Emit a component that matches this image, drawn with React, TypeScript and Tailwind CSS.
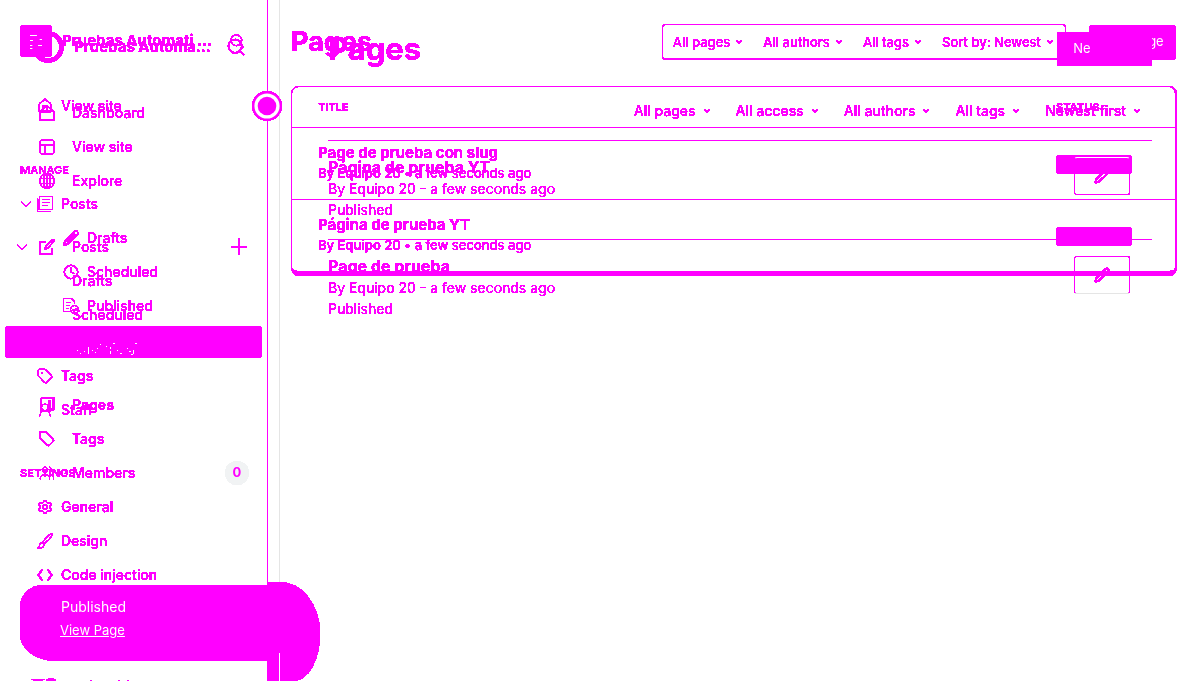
import type { ReactNode } from "react";
import {
  ChevronDown,
  Clock,
  House,
  PanelsTopLeft,
  Pencil,
  Plus,
  Search,
  Settings,
  Tag,
  Users,
  UserRound,
} from "lucide-react";

const icon = "size-4 shrink-0";

function Glyph({ children, width = 1.2 }: { children: ReactNode; width?: number }) {
  return (
    <svg viewBox="0 0 16 16" className="size-4 shrink-0" fill="none" stroke="currentColor" strokeWidth={width} aria-hidden="true">
      {children}
    </svg>
  );
}

const PostsIcon = () => (
  <Glyph>
    <path d="M2.500 .5H15.500V13.500H2.500Z M.5 2.500V15.500H13.500 M5 3.500H13 M5 6.500H13 M5 9.500H10.500" />
  </Glyph>
);
const PublishedIcon = () => (
  <Glyph>
    <path d="M7 13.500H.5V.5H8.500L11.500 3.500V6 M3 4.500H8 M3 7.500H6.500 M3 10.500H5.500" />
    <circle cx="11.500" cy="11.500" r="4" />
    <path d="M9.500 11.500L11 13L13.500 10" />
  </Glyph>
);
const PencilIcon = () => (
  <Glyph width={1.6}>
    <path d="M1 15L2 10.800L11.500 1.500Q13 .4 14.400 1.700Q15.600 3 14.500 4.500L5.200 14Z M3.800 11.800L12 4" />
  </Glyph>
);
const BrushIcon = () => (
  <Glyph width={1.2}>
    <path d="M6 9Q10 3 14 .8Q16 .5 15.200 2.200Q13 6.500 7.500 10.200Z M5.500 9.500Q2.800 9.500 2.700 12Q2.500 14 .6 15.200Q6.500 16 7.200 11.500Z" />
  </Glyph>
);
const CodeIcon = () => (
  <Glyph width={1.8}>
    <path d="M5.500 2.500L1 8L5.500 13.500 M10.500 2.500L15 8L10.500 13.500" />
  </Glyph>
);
const GlobeIcon = () => (
  <Glyph>
    <circle cx="8" cy="8" r="7.300" />
    <ellipse cx="8" cy="8" rx="3.400" ry="7.300" />
    <path d="M8 .7V15.300 M1 5.500H15 M1 10.500H15" />
  </Glyph>
);
const DashboardIcon = () => (
  <Glyph>
    <path d="M.6 7L8 .8L15.400 7V15.400H.6Z M5.500 8V5.500H10.500V8" />
  </Glyph>
);
const ComposeIcon = () => (
  <Glyph width={1.3}>
    <path d="M7 2.600H.7V15.300H13.300V9 M6 10L6.800 7.300L13 1Q14.500 .3 15.300 1.800L8.800 9.200Z" />
  </Glyph>
);
const BookIcon = () => (
  <Glyph width={1.6}>
    <path d="M2 1H14.500V12.500H11 M2 1V14H10.500V3" />
  </Glyph>
);
const LabelIcon = () => (
  <Glyph width={1.5}>
    <path d="M1 1H7L15 9.500L9.500 15L1 7Z" />
  </Glyph>
);

function SharpFilter() {
  return (
    <svg width="0" height="0" className="absolute" aria-hidden="true">
      <filter id="sharp" x="0" y="0" width="100%" height="100%" colorInterpolationFilters="sRGB">
        <feComponentTransfer>
          <feFuncA type="discrete" tableValues="0 1 1 1 1 1" />
        </feComponentTransfer>
      </filter>
    </svg>
  );
}

function Select({ label, name, small }: { label: string; name: string; small?: boolean }) {
  return (
    <label className={small ? "flex items-center gap-1 text-[13px]" : "flex items-center gap-1.5 text-sm"}>
      <select
        aria-label={name}
        className="cursor-pointer appearance-none bg-transparent font-medium leading-5 [field-sizing:content]"
      >
        <option>{label}</option>
      </select>
      <ChevronDown className="size-2.5" strokeWidth={3} />
    </label>
  );
}

function NavA({ label, children, nested }: { label: string; children: ReactNode; nested?: boolean }) {
  return (
    <a
      href="#"
      className={
        nested
          ? "flex h-[34px] items-center gap-2 pl-[63px] text-sm font-medium"
          : "flex h-[34px] items-center gap-2 pl-[37px] text-sm font-medium"
      }
    >
      {children}
      {label}
    </a>
  );
}

function NavB({ label, children }: { label: string; children?: ReactNode }) {
  return (
    <a href="#" className="flex h-[34px] items-center text-sm font-medium">
      <span className="w-[72px] shrink-0 pl-[39px]">{children}</span>
      {label}
    </a>
  );
}

function PageRowA({ title }: { title: string }) {
  return (
    <tr className="h-[72px] border-t border-[#ff00ff]">
      <td className="pb-0.5 pl-[26px]">
        <div className="text-[15px] font-bold leading-[21px]">{title}</div>
        <div className="text-[13px] font-medium leading-5">
          By <span className="font-semibold">Equipo 20</span> • a few seconds ago
        </div>
      </td>
      <td className="w-[119px] pt-0.5">
        <span className="block h-[19px] w-[76px] rounded bg-[#ff00ff] px-2 text-xs leading-[19px]">Published</span>
      </td>
    </tr>
  );
}

function ClassicScreen() {
  return (
    <div className="col-start-1 row-start-1 flex min-w-0">
      <aside className="w-[268px] shrink-0 border-r border-[#ff00ff]">
        <div className="mt-[25px] flex h-8 items-center gap-2.5 pl-5 pr-[22px]">
          <svg viewBox="0 0 32 32" className="size-8 shrink-0">
            <rect width="32" height="32" rx="4" fill="#f0f" />
            <path
              d="M10 10.500H17 M18 14.500H22 M10 15.500H13 M15 17.500H17 M10 20.500H14 M18 20.500H22 M10 23.500H13 M20 11L17 15"
              stroke="#fff"
              strokeWidth="1"
            />
          </svg>
          <span className="grow whitespace-nowrap text-[15px] font-bold">Pruebas Automati ...</span>
          <Search className="size-4 shrink-0" />
        </div>
        <nav className="mt-8">
          <NavA label="View site"><House className={icon} /></NavA>
          <h2 className="mt-[37px] pl-5 text-[11px] font-semibold leading-5">MANAGE</h2>
          <div className="mt-[7px] flex items-center">
            <ChevronDown className="-mr-[35px] ml-[17px] size-[18px]" strokeWidth={1.3} />
            <NavA label="Posts"><PostsIcon /></NavA>
          </div>
          <NavA label="Drafts" nested><PencilIcon /></NavA>
          <NavA label="Scheduled" nested><Clock className={icon} /></NavA>
          <NavA label="Published" nested><PublishedIcon /></NavA>
          <a href="#" className="mx-[5px] mb-px mt-[3px] flex h-8 items-center rounded bg-[#ff00ff] pl-14 text-sm">
            Pages
          </a>
          <NavA label="Tags"><Tag className={icon} /></NavA>
          <NavA label="Staff"><UserRound className={icon} strokeWidth={1.5} /></NavA>
          <h2 className="mt-9 pl-5 text-[11px] font-bold leading-5">SETTINGS</h2>
          <div className="mt-[7px]">
            <NavA label="General"><Settings className={icon} /></NavA>
            <NavA label="Design"><BrushIcon /></NavA>
            <NavA label="Code injection"><CodeIcon /></NavA>
          </div>
        </nav>
      </aside>
      <main className="min-w-0 grow pl-[23px] pr-6">
        <header className="mt-6 flex h-9 items-center">
          <h1 className="grow text-[27px] font-bold leading-8">Pages</h1>
          <div className="flex h-9 items-center gap-[19px] rounded border border-b-2 border-[#ff00ff] px-2.5">
            <Select small name="Page type" label="All pages" />
            <Select small name="Author" label="All authors" />
            <Select small name="Tag" label="All tags" />
            <Select small name="Sort order" label="Sort by: Newest" />
          </div>
          <button className="ml-[23px] h-[35px] w-[87px] rounded bg-[#ff00ff] text-[13px] text-white">New page</button>
        </header>
        <div className="-mr-px mt-[26px] rounded-lg border border-b-[5px] border-r-2 border-[#ff00ff]">
          <table className="w-full border-collapse text-left">
            <thead>
              <tr className="h-10 text-[11px]">
                <th className="pl-[26px] font-bold">TITLE</th>
                <th className="font-bold">STATUS</th>
              </tr>
            </thead>
            <tbody>
              <PageRowA title="Page de prueba con slug" />
              <PageRowA title="Página de prueba YT" />
            </tbody>
          </table>
        </div>
      </main>
    </div>
  );
}

function PageRowB({ title, edge }: { title: string; edge: string }) {
  return (
    <li className="flex h-[99px] justify-between border-t border-[#ff00ff] pt-4">
      <div className="-mt-px text-sm">
        <h3 className="text-base font-bold leading-[22px]">{title}</h3>
        <p className="leading-[22px]">By Equipo 20 - a few seconds ago</p>
        <p className="leading-5">Published</p>
      </div>
      <button
        aria-label={"Edit " + title}
        className={"mr-[22px] flex h-[38px] w-14 items-center justify-center rounded-[3px] border border-[#ff00ff] " + edge}
      >
        <Pencil className="size-4" strokeWidth={2.6} />
      </button>
    </li>
  );
}

function CurrentScreen() {
  return (
    <div className="col-start-1 row-start-1 flex min-w-0">
      <aside className="w-[280px] shrink-0 border-r border-[#e5e5e5]">
        <div className="mt-[31px] flex h-8 items-center gap-2.5 pl-8 pr-[33px]">
          <svg viewBox="0 0 32 32" className="size-8 shrink-0">
            <circle cx="16" cy="16" r="13.500" fill="none" stroke="#f0f" strokeWidth="4.500" />
          </svg>
          <span className="grow whitespace-nowrap text-[15px] font-bold">Pruebas Automa...</span>
          <Search className="size-5 shrink-0" />
        </div>
        <nav className="mt-[33px]">
          <NavB label="Dashboard"><DashboardIcon /></NavB>
          <NavB label="View site"><PanelsTopLeft className="size-[18px] -ml-px" /></NavB>
          <NavB label="Explore"><GlobeIcon /></NavB>
          <div className="mt-8 flex items-center">
            <ChevronDown className="-mr-[31px] ml-[13px] size-[18px]" strokeWidth={1.3} />
            <div className="grow"><NavB label="Posts"><ComposeIcon /></NavB></div>
            <button aria-label="New post" className="mr-7"><Plus className="size-[26px] -mx-px" strokeWidth={1.5} /></button>
          </div>
          <NavB label="Drafts" />
          <NavB label="Scheduled" />
          <NavB label="Published" />
          <div className="mt-[22px]">
            <div className="[&>a]:font-bold"><NavB label="Pages"><BookIcon /></NavB></div>
            <NavB label="Tags"><LabelIcon /></NavB>
            <div className="flex items-center justify-between pr-[30px]">
              <NavB label="Members"><Users className={icon} strokeWidth={1.5} /></NavB>
              <span className="flex size-6 items-center justify-center rounded-full bg-[#f1f3f4] text-[13px] font-bold">0</span>
            </div>
          </div>
        </nav>
      </aside>
      <main className="min-w-0 grow px-12">
        <header className="mt-8 flex h-[34px] items-center justify-between">
          <h1 className="text-[31px] font-bold leading-8">Pages</h1>
          <button className="h-[34px] w-[95px] rounded-[1px] bg-[#ff00ff] text-[13px] text-white">
            Ne<span className="text-[#ff00ff]">w page</span>
          </button>
        </header>
        <div className="mt-[35px] flex justify-end gap-6 pr-2.5">
          <Select name="Page type" label="All pages" />
          <Select name="Access" label="All access" />
          <Select name="Author" label="All authors" />
          <Select name="Tag" label="All tags" />
          <Select name="Sort order" label="Newest first" />
        </div>
        <ul className="mt-[19px]">
          <PageRowB title="Página de prueba YT" edge="border-t-white" />
          <PageRowB title="Page de prueba" edge="border-b-[#e5e5e5]" />
        </ul>
      </main>
    </div>
  );
}

function Toast() {
  return (
    <div role="status" className="absolute bottom-0 left-5 flex h-[99px] text-white">
      <div className="mb-5 mt-[3px] w-[248px] bg-[#ff00ff] pl-10 pt-3 text-sm [border-radius:22px_0_0_36px/22px_0_0_26px]">
        <p className="pl-px leading-5">Published</p>
        <a href="#" className="mt-[3px] block text-[13px] leading-5 underline">View Page</a>
      </div>
      <div className="-ml-px flex w-[53px] items-end bg-[#ff00ff] [border-radius:0_40px_26px_0/0_50px_46px_0]">
        <span className="ml-3 h-7 w-px bg-white" />
      </div>
    </div>
  );
}

export default function App() {
  return (
    <div className="h-screen overflow-hidden bg-white">
      <SharpFilter />
      <div className="relative grid h-full grid-cols-1 grid-rows-1 overflow-hidden font-['Inter',sans-serif] text-[#ff00ff] [filter:url(#sharp)]">
        <ClassicScreen />
        <CurrentScreen />
        <svg viewBox="0 0 30 30" className="absolute left-[252px] top-[91px] size-[30px]" aria-hidden="true">
          <circle cx="15" cy="15" r="13.800" fill="#fff" stroke="#f0f" strokeWidth="2.400" />
          <circle cx="15" cy="15" r="9.300" fill="#f0f" />
        </svg>
        <svg viewBox="0 0 64 14" className="absolute left-[76px] top-[342px] h-3.5 w-16" aria-hidden="true">
          <path
            fill="#fff"
            d="M1 8h1v1h-1z M4 11h1v1h-1z M8 9h1v1h-1z M12 5h1v7h-1z M16 8h1v1h-1z M19 10h1v1h-1z M21 6h1v1h-1z M24 2h1v1h-1z M30 4h1v1h-1z M34 5h1v2h-1z M37 1h2v1h-2z M34 9h1v3h-1z M41 8h1v1h-1z M44 11h2v1h-2z M51 6h1v1h-1z M53 9h2v1h-2z M57 8h1v4h-1z M59 1h2v1h-2z M55 12h2v1h-2z"
          />
        </svg>
        <svg viewBox="0 0 100 3" className="absolute bottom-0 left-[31px] h-[3px] w-[100px]" aria-hidden="true">
          <path fill="currentColor" d="M0 1h14v1h-14z M2 2h10v1h-10z M17 0h6v1h-6z M15 1h10v2h-10z M59 2h2v1h-2z M87 2h2v1h-2z M96 2h2v1h-2z" />
        </svg>
        <Toast />
      </div>
    </div>
  );
}
